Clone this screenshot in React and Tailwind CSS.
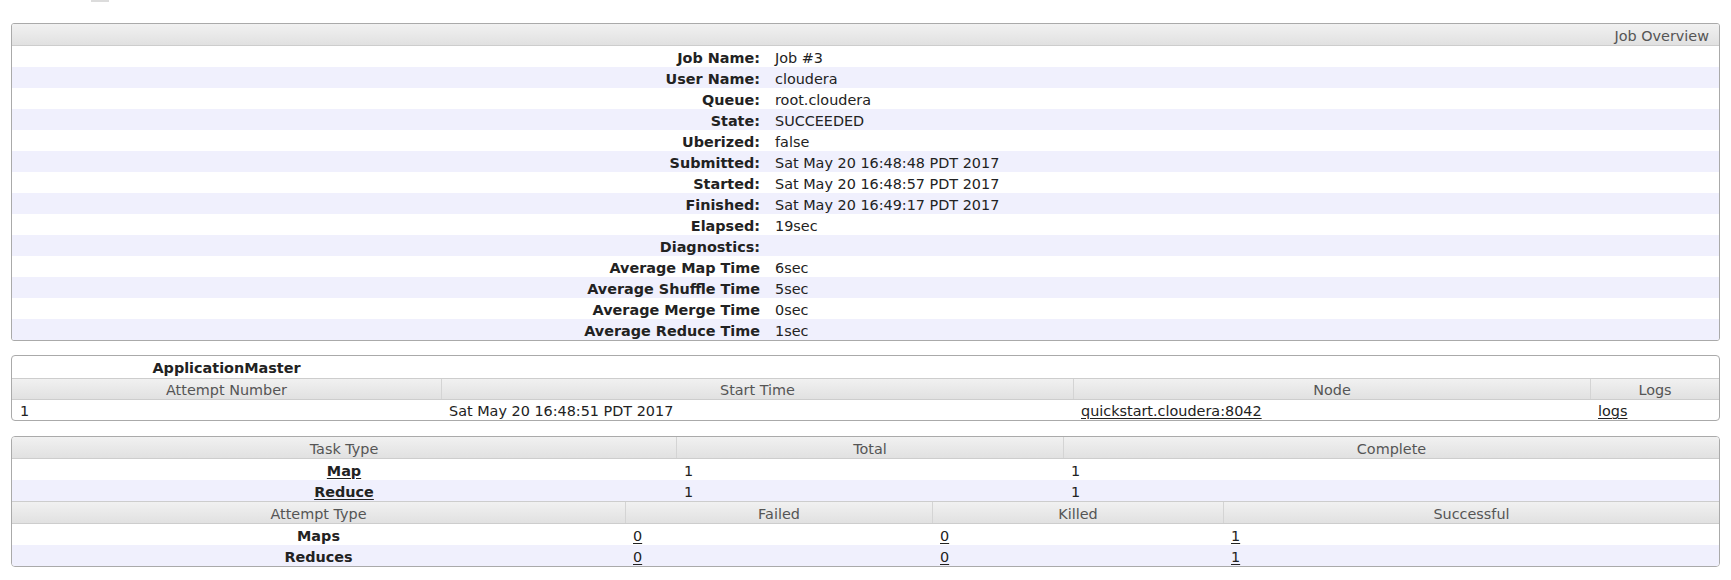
import React from "react";

const overview = [
  ["Job Name:", "Job #3"],
  ["User Name:", "cloudera"],
  ["Queue:", "root.cloudera"],
  ["State:", "SUCCEEDED"],
  ["Uberized:", "false"],
  ["Submitted:", "Sat May 20 16:48:48 PDT 2017"],
  ["Started:", "Sat May 20 16:48:57 PDT 2017"],
  ["Finished:", "Sat May 20 16:49:17 PDT 2017"],
  ["Elapsed:", "19sec"],
  ["Diagnostics:", ""],
  ["Average Map Time", "6sec"],
  ["Average Shuffle Time", "5sec"],
  ["Average Merge Time", "0sec"],
  ["Average Reduce Time", "1sec"],
];

const headBg = "bg-linear-to-b from-[#f1f1f1] via-[#e9e9e9] to-[#e1e1e1]";

function Th({ children, first }) {
  return (
    <div
      className={`flex items-center justify-center pt-[3px] text-[#555] ${
        first ? "" : "border-l border-[#d4d4d4]"
      }`}
    >
      {children}
    </div>
  );
}

function Td({ children, className = "" }) {
  return <div className={`flex items-center px-2 pt-[3px] ${className}`}>{children}</div>;
}

function Link({ children, className = "" }) {
  return <span className={`underline underline-offset-2 ${className}`}>{children}</span>;
}

export default function App() {
  return (
    <div className="min-h-[580px] bg-white px-[11px] font-['DejaVu_Sans',Verdana,sans-serif] text-[14.4px] leading-none text-[#222]">
      <div className="ml-[80px] h-[2px] w-[18px] bg-[#dcdcdc]" />

      {/* Job Overview */}
      <div className="mt-[21px] overflow-hidden rounded-[3px] border border-[#aaa]">
        <div className={`flex h-[22px] items-center justify-end border-b border-[#cdcdcd] pt-[3px] pr-[10px] text-[#555] ${headBg}`}>
          Job Overview
        </div>
        {overview.map(([k, v], i) => (
          <div
            key={k}
            className={`grid h-[21px] grid-cols-[756px_1fr] ${i % 2 ? "bg-[#f0f0fd]" : "bg-white"}`}
          >
            <div className="flex items-center justify-end px-2 pt-[3px] font-bold">{k}</div>
            <Td className="pl-[7px]">{v}</Td>
          </div>
        ))}
      </div>

      {/* ApplicationMaster */}
      <div className="mt-[14px] overflow-hidden rounded-[4px] border border-[#aaa]">
        <div className="grid h-[22px] grid-cols-[429px_1fr]">
          <div className="flex items-center justify-center pt-[3px] font-bold">ApplicationMaster</div>
          <div />
        </div>
        <div className={`grid h-[22px] grid-cols-[429px_632px_517px_129px] border-y border-[#cdcdcd] ${headBg}`}>
          <Th first>Attempt Number</Th>
          <Th>Start Time</Th>
          <Th>Node</Th>
          <Th>Logs</Th>
        </div>
        <div className="grid h-[20px] grid-cols-[429px_632px_517px_129px]">
          <Td>1</Td>
          <Td>Sat May 20 16:48:51 PDT 2017</Td>
          <Td>
            <Link>quickstart.cloudera:8042</Link>
          </Td>
          <Td>
            <Link>logs</Link>
          </Td>
        </div>
      </div>

      {/* Tasks and attempts */}
      <div className="mt-[15px] overflow-hidden rounded-[4px] border border-[#aaa]">
        <div className={`grid h-[22px] grid-cols-[664px_387px_656px] border-b border-[#cdcdcd] ${headBg}`}>
          <Th first>Task Type</Th>
          <Th>Total</Th>
          <Th>Complete</Th>
        </div>
        {[
          ["Map", "1", "1"],
          ["Reduce", "1", "1"],
        ].map(([t, a, b], i) => (
          <div
            key={t}
            className={`grid h-[21px] grid-cols-[664px_387px_656px] ${i % 2 ? "bg-[#f0f0fd]" : "bg-white"}`}
          >
            <div className="flex items-center justify-center pt-[3px] font-bold">
              <Link>{t}</Link>
            </div>
            <Td>{a}</Td>
            <Td>{b}</Td>
          </div>
        ))}
        <div className={`grid h-[23px] grid-cols-[613px_307px_291px_496px] border-y border-[#cdcdcd] ${headBg}`}>
          <Th first>Attempt Type</Th>
          <Th>Failed</Th>
          <Th>Killed</Th>
          <Th>Successful</Th>
        </div>
        {[
          ["Maps", "0", "0", "1"],
          ["Reduces", "0", "0", "1"],
        ].map(([t, f, k, s], i) => (
          <div
            key={t}
            className={`grid h-[21px] grid-cols-[613px_307px_291px_496px] ${i % 2 ? "bg-[#f0f0fd]" : "bg-white"}`}
          >
            <div className="flex items-center justify-center pt-[3px] font-bold">{t}</div>
            <Td>
              <Link>{f}</Link>
            </Td>
            <Td>
              <Link>{k}</Link>
            </Td>
            <Td>
              <Link>{s}</Link>
            </Td>
          </div>
        ))}
      </div>
    </div>
  );
}
